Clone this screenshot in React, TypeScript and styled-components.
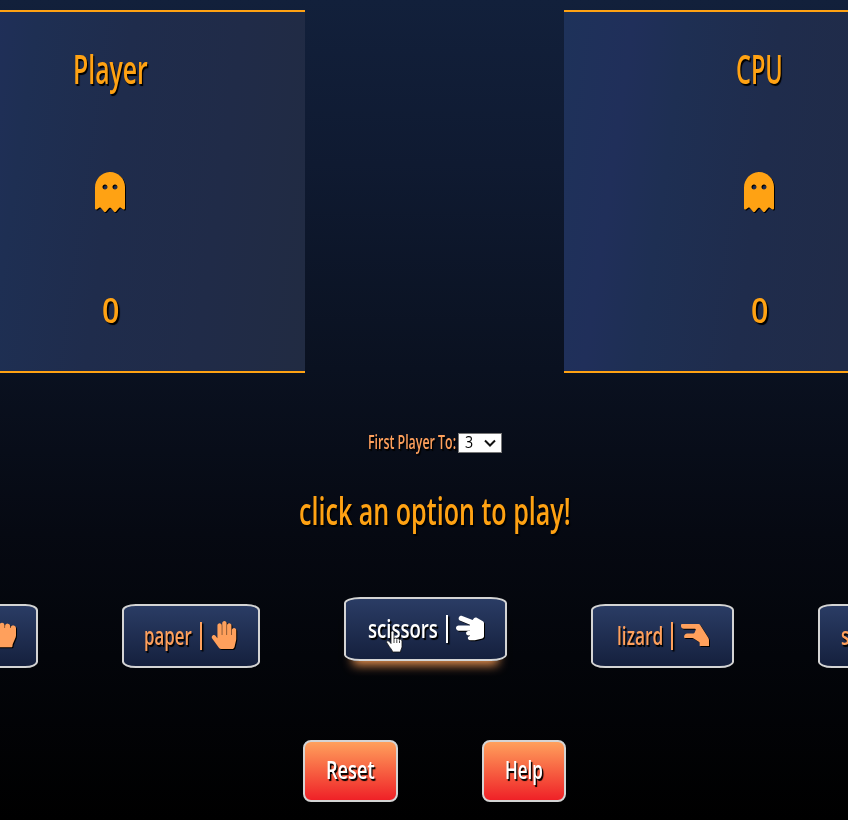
import React, { ReactNode, useLayoutEffect, useRef } from "react";
import styled, { createGlobalStyle, css } from "styled-components";
import { FaGhost, FaHandLizard, FaHandPaper, FaHandRock, FaHandScissors, FaHandSpock } from "react-icons/fa";

const Global = createGlobalStyle`
  html { background: #000; }
  body { margin: 0; overflow: hidden; }
  * { box-sizing: border-box; }
`;

const Page = styled.main`
  width: 869px;
  height: 820px;
  padding-top: 10px;
  overflow: hidden;
  display: flex;
  flex-direction: column;
  align-items: center;
  background: linear-gradient(180deg, #12203b 0%, #0f1a31 20%, #0a1120 45%, #060912 65%, #03050a 80%, #000 100%);
  font-family: "Open Sans", "Noto Sans", sans-serif;
  color: #ffa213;
`;

const Fit = styled.span<{ $width: number; $size: number; $weight: number; $plain?: boolean }>`
  display: inline-block;
  flex: none;
  width: ${(p) => p.$width}px;
  font-size: ${(p) => p.$size}px;
  font-weight: ${(p) => p.$weight};
  line-height: 1.2;
  white-space: nowrap;
  text-shadow: ${(p) => (p.$plain ? "none" : "2px 1.5px 1px #000")};
`;

const FitInner = styled.span`
  display: inline-block;
  transform-origin: 0 50%;
`;

interface CondensedProps {
  width: number;
  size: number;
  weight?: number;
  plain?: boolean;
  children: ReactNode;
}

function Condensed({ width, size, weight = 650, plain, children }: CondensedProps) {
  const ref = useRef<HTMLSpanElement>(null);
  useLayoutEffect(() => {
    const el = ref.current;
    if (el) el.style.transform = `scaleX(${width / el.offsetWidth})`;
  }, [width]);
  return (
    <Fit $width={width} $size={size} $weight={weight} $plain={plain}>
      <FitInner ref={ref}>{children}</FitInner>
    </Fit>
  );
}

const Scoreboard = styled.section`
  flex: none;
  width: 1039px;
  display: flex;
  justify-content: space-between;
`;

const Panel = styled.article`
  width: 390px;
  height: 363px;
  padding-top: 34px;
  border-top: 2px solid #ffa213;
  border-bottom: 2px solid #ffa213;
  background: linear-gradient(98deg, #1e325a 0%, #202f5a 16%, #1e2f53 28%, #1f2c4c 50%, #202b48 75%, #212b42 100%);
  display: flex;
  flex-direction: column;
  align-items: center;
`;

const Ghost = styled(FaGhost)`
  flex: none;
  width: 30px;
  height: 40px;
  margin: 79px 0 78px;
  filter: drop-shadow(1.5px 1px 0.3px #000);
`;

const Target = styled.label`
  margin-top: 57px;
  height: 24px;
  display: flex;
  align-items: center;
  gap: 2px;
  color: #ffa05c;
`;

const SelectBox = styled.span`
  width: 44px;
  height: 20px;
  margin-top: 2px;
  padding: 0 5px 0 6px;
  display: flex;
  align-items: center;
  justify-content: space-between;
  border: 1px solid #777;
  background: #fff;
  color: #000;
`;

const Message = styled.h1`
  margin: 34px 0 0;
  height: 48px;
  font-size: 0;
`;

const Options = styled.section`
  flex: none;
  margin-top: 68px;
  display: flex;
  gap: 84px;
`;

const Option = styled.button<{ $width: number; $active?: boolean }>`
  position: relative;
  flex: none;
  width: ${(p) => p.$width}px;
  height: 64px;
  padding: 0;
  display: flex;
  align-items: center;
  justify-content: center;
  gap: 8px;
  border: 2px solid #d4d4d4;
  border-radius: 10% / 10%;
  background: linear-gradient(180deg, #2b3d66, #141f3c);
  background-origin: border-box;
  color: #ffa05c;
  font-family: inherit;
  ${(p) =>
    p.$active &&
    css`
      transform: translateY(-7px);
      color: #fff;
      box-shadow: 0 13px 10px -9px #e8924f;
    `}
`;

const Bar = styled.i`
  flex: none;
  width: 2px;
  height: 28px;
  background: currentColor;
  box-shadow: 1.5px 1.5px 1px #000;
`;

const Hand = styled.span`
  flex: none;
  display: flex;
  margin-top: -2px;
  svg {
    height: 28px;
    width: auto;
    filter: drop-shadow(1.5px 1px 0.3px #000);
  }
`;

const Pointer = styled.svg`
  position: absolute;
  left: 40px;
  top: 31px;
  width: 18px;
  height: 24px;
`;

const Actions = styled.footer`
  flex: none;
  margin-top: 72px;
  display: flex;
  gap: 84px;
`;

const Action = styled.button<{ $width: number }>`
  width: ${(p) => p.$width}px;
  height: 62px;
  padding: 0 0 3px;
  display: flex;
  align-items: center;
  justify-content: center;
  border: 2px solid #d4d4d4;
  border-radius: 8px;
  background: linear-gradient(180deg, #ffa05c, #ef2127);
  color: #fff;
  font-family: inherit;
`;

const options = [
  { name: "rock", text: 38, width: 128, Icon: FaHandRock },
  { name: "paper", text: 48, width: 138, Icon: FaHandPaper },
  { name: "scissors", text: 70, width: 163, Icon: FaHandScissors, active: true },
  { name: "lizard", text: 46, width: 143, Icon: FaHandLizard },
  { name: "spock", text: 49, width: 141, Icon: FaHandSpock },
];

const players = [
  { name: "Player", width: 75 },
  { name: "CPU", width: 47 },
];

export default function App() {
  return (
    <>
      <Global />
      <Page>
        <Scoreboard>
          {players.map((p) => (
            <Panel key={p.name}>
              <Condensed width={p.width} size={39}>{p.name}</Condensed>
              <Ghost />
              <Condensed width={17} size={34} weight={570}>0</Condensed>
            </Panel>
          ))}
        </Scoreboard>
        <Target>
          <Condensed width={88} size={19}>First Player To:</Condensed>
          <SelectBox>
            <Condensed width={8} size={16} weight={500} plain>3</Condensed>
            <svg width="12" height="8" viewBox="0 0 12 8" fill="none" stroke="#111" strokeWidth="2">
              <path d="M1 1.5 6 6.5 11 1.5" />
            </svg>
          </SelectBox>
        </Target>
        <Message>
          <Condensed width={272} size={38}>click an option to play!</Condensed>
        </Message>
        <Options>
          {options.map(({ name, text, width, Icon, active }) => (
            <Option key={name} $width={width} $active={active}>
              <Condensed width={text} size={26}>{name}</Condensed>
              <Bar />
              <Hand><Icon /></Hand>
              {active && (
                <Pointer viewBox="0 0 18 24">
                  <path
                    d="M5 2.5C5 .4 8 .4 8 2.5V9c.3-1.300 2.600-1.200 2.800.3.500-1.200 2.500-.9 2.700.6.600-1 2.500-.7 2.500 1.200v5.400c0 2-1.500 3.200-1.500 5.500H6.500c0-2-2.100-3.600-3.300-5.600L.8 12.800c-1-1.700 1.100-2.800 2.300-1.500L5 13.500Z"
                    fill="#fff" stroke="#111" strokeWidth=".8"
                  />
                  <path d="M8 9v4M10.800 9.800V13M13.500 10.500V13" stroke="#111" strokeWidth=".8" />
                </Pointer>
              )}
            </Option>
          ))}
        </Options>
        <Actions>
          <Action $width={95}><Condensed width={49} size={26}>Reset</Condensed></Action>
          <Action $width={84}><Condensed width={38} size={26}>Help</Condensed></Action>
        </Actions>
      </Page>
    </>
  );
}
